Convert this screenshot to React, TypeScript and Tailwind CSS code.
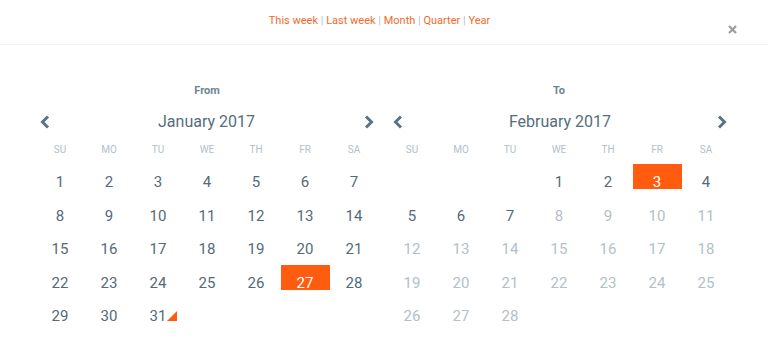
import React from "react";

const weekDays = ["SU", "MO", "TU", "WE", "TH", "FR", "SA"];
const ranges = ["This week", "Last week", "Month", "Quarter", "Year"];

type Cell = { day: number; faded?: boolean; selected?: boolean; marker?: boolean } | null;

function buildMonth(offset: number, days: number, opts: (d: number) => Partial<NonNullable<Cell>>): Cell[][] {
  const cells: Cell[] = [];
  for (let i = 0; i < offset; i++) cells.push(null);
  for (let d = 1; d <= days; d++) cells.push({ day: d, ...opts(d) });
  while (cells.length % 7) cells.push(null);
  const rows: Cell[][] = [];
  for (let i = 0; i < cells.length; i += 7) rows.push(cells.slice(i, i + 7));
  return rows;
}

const january = buildMonth(0, 31, (d) => ({ selected: d === 27, marker: d === 31 }));
const february = buildMonth(3, 28, (d) => ({ selected: d === 3, faded: d > 7 }));

function Chevron({ dir }: { dir: "left" | "right" }) {
  return (
    <svg width="10" height="14" viewBox="0 0 10 14" aria-hidden="true">
      <polyline
        points={dir === "left" ? "8,1.5 2.5,7 8,12.5" : "2,1.5 7.5,7 2,12.5"}
        fill="none"
        stroke="#5b7383"
        strokeWidth="3"
      />
    </svg>
  );
}

function Calendar({ label, title, rows, chevronPad }: { label: string; title: string; rows: Cell[][]; chevronPad: string }) {
  return (
    <div className="flex w-[343px] flex-col">
      <div className="text-center text-[11px] font-bold leading-4 text-[#6f8594]">{label}</div>
      <div className={`mt-[11px] flex h-6 items-center justify-between ${chevronPad}`}>
        <Chevron dir="left" />
        <span className="text-[16px] leading-6 text-[#566d7c]">{title}</span>
        <Chevron dir="right" />
      </div>
      <div className="mt-[9px] grid grid-cols-7">
        {weekDays.map((d) => (
          <div key={d} className="text-center text-[10px] leading-[14px] text-[#b3c0c9]">
            {d}
          </div>
        ))}
      </div>
      <div className="mt-[7px] flex flex-col">
        {rows.map((row, r) => (
          <div key={r} className="grid h-[33.5px] grid-cols-7">
            {row.map((cell, c) => (
              <div key={c} className="relative">
                {cell?.selected && <div className="absolute inset-x-0 top-0 h-[25px] bg-[#ff5c0f]" />}
                {cell && (
                  <div
                    className={`relative pt-[8px] text-center text-[15px] leading-5 ${
                      cell.selected ? "text-white" : cell.faded ? "text-[#b3c0c8]" : "text-[#546a79]"
                    }`}
                  >
                    {cell.day}
                  </div>
                )}
                {cell?.marker && (
                  <svg className="absolute right-[6px] top-[13px]" width="10" height="10" viewBox="0 0 10 10" aria-hidden="true">
                    <polygon points="10,0 10,10 0,10" fill="#ff5c0f" />
                  </svg>
                )}
              </div>
            ))}
          </div>
        ))}
      </div>
    </div>
  );
}

export default function App() {
  return (
    <div className="h-[358px] w-full bg-white font-['Roboto',sans-serif]">
      <div className="relative flex h-[45px] justify-center border-b border-[#f3f3f3] pr-[9px] pt-[13px]">
        <div className="text-[11px] leading-4 text-[#f26a2c]">
          {ranges.map((r, i) => (
            <React.Fragment key={r}>
              {i > 0 && <span className="text-[#b6c3cb]"> | </span>}
              <span>{r}</span>
            </React.Fragment>
          ))}
        </div>
        <svg className="absolute right-[31px] top-[25px]" width="9" height="9" viewBox="0 0 9 9" aria-hidden="true">
          <path d="M1 1 L8 8 M8 1 L1 8" stroke="#9c9c9c" strokeWidth="2.2" />
        </svg>
      </div>
      <div className="flex justify-center gap-[9px] pr-[2px] pt-[38px]">
        <Calendar label="From" title="January 2017" rows={january} chevronPad="pl-[4px] pr-[5px]" />
        <Calendar label="To" title="February 2017" rows={february} chevronPad="pl-[5px] pr-[3px]" />
      </div>
    </div>
  );
}
